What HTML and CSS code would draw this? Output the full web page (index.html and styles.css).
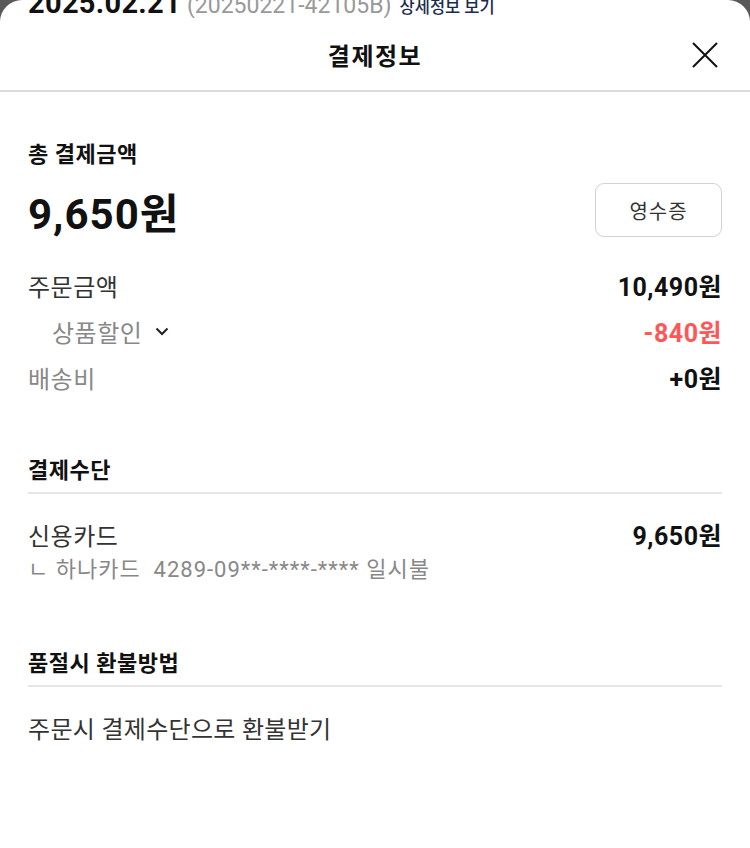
FILE: index.html
```html
<!DOCTYPE html>
<html lang="ko">
<head>
<meta charset="utf-8">
<title>결제정보</title>
<link rel="stylesheet" href="styles.css">
</head>
<body>
<div class="sheet">
  <div class="peek">
    <div class="peek-line">
      <span class="peek-date">2025.02.21</span>
      <span class="peek-no">(20250221-42105B)</span>
      <span class="peek-link">상세정보 보기</span>
    </div>
  </div>
  <header class="header">
    <h1 class="title">결제정보</h1>
    <svg class="close" width="26" height="26" viewBox="0 0 26 26" aria-hidden="true">
      <path d="M1 1 L25 25 M25 1 L1 25" stroke="#111" stroke-width="2" fill="none"/>
    </svg>
  </header>

  <section class="sec sec-total">
    <h2 class="heading">총 결제금액</h2>
    <div class="total-row">
      <span class="total">9,650원</span>
      <button class="receipt">영수증</button>
    </div>
    <div class="row">
      <span class="label dark">주문금액</span>
      <span class="value">10,490원</span>
    </div>
    <div class="row">
      <span class="label sub">상품할인
        <svg class="chev" width="14" height="9" viewBox="0 0 14 9" aria-hidden="true"><path d="M1.5 1.5 L7 7 L12.5 1.5" stroke="#222" stroke-width="2" fill="none"/></svg>
      </span>
      <span class="value red">-840원</span>
    </div>
    <div class="row">
      <span class="label">배송비</span>
      <span class="value">+0원</span>
    </div>
  </section>

  <section class="sec sec-pay">
    <h2 class="heading ruled">결제수단</h2>
    <div class="row pay-row">
      <span class="label dark">신용카드</span>
      <span class="value">9,650원</span>
    </div>
    <div class="card-info">ㄴ 하나카드&nbsp; 4289-09**-****-**** 일시불</div>
  </section>

  <section class="sec sec-refund">
    <h2 class="heading ruled">품절시 환불방법</h2>
    <p class="refund">주문시 결제수단으로 환불받기</p>
  </section>
</div>
</body>
</html>
```

FILE: styles.css
```css
* { box-sizing: border-box; }
html, body { margin: 0; padding: 0; height: 100%; }
body {
  background: #595959;
  font-family: Roboto, "Noto Sans CJK KR", sans-serif;
  color: #111;
}
.sheet {
  background: #fff;
  border-radius: 22px 22px 0 0;
  height: 848px;
  overflow: hidden;
}
.peek {
  height: 18px;
  overflow: hidden;
  padding: 0 28px;
}
.peek-line {
  display: flex;
  align-items: baseline;
  gap: 6px;
  margin-top: -12px;
  line-height: 30px;
  white-space: nowrap;
}
.peek-date { font-size: 29px; font-weight: 700; color: #111; letter-spacing: 0.3px; }
.peek-no { font-size: 23px; color: #999; }
.peek-link { font-size: 16.5px; color: #1b2b4d; font-weight: 500; margin-left: 2px; }

.header {
  height: 74px;
  padding-top: 6px;
  border-bottom: 2px solid #d9dcdf;
  display: flex;
  align-items: center;
  justify-content: center;
  position: relative;
}
.title {
  margin: 0;
  font-size: 24px;
  font-weight: 700;
  line-height: 30px;
  letter-spacing: 1.5px;
  color: #111;
}
.close {
  position: absolute;
  right: 32px;
  top: 24px;
}

.sec { padding: 0 28px; }
.sec-total { padding-top: 48px; }
.sec-pay { padding-top: 56px; }
.sec-refund { padding-top: 66px; }

.heading {
  margin: 0;
  font-size: 22px;
  font-weight: 700;
  line-height: 30px;
  letter-spacing: 0.5px;
  color: #111;
}
.heading.ruled {
  padding-bottom: 6px;
  border-bottom: 2px solid #e6e6e6;
}

.total-row {
  display: flex;
  justify-content: space-between;
  align-items: center;
  margin-top: 13px;
  height: 54px;
  margin-bottom: 25px;
}
.total {
  font-size: 42px;
  font-weight: 700;
  letter-spacing: 1px;
  color: #111;
}
.receipt {
  width: 127px;
  height: 54px;
  border: 1.5px solid #d2d2d2;
  border-radius: 9px;
  background: #fff;
  font-family: "Noto Sans CJK KR", sans-serif;
  font-size: 20px;
  letter-spacing: 1px;
  color: #333;
  padding: 0;
}

.row {
  display: flex;
  justify-content: space-between;
  align-items: center;
  height: 46px;
}
.label {
  font-size: 24px;
  letter-spacing: 0.5px;
  color: #888;
  display: flex;
  align-items: center;
}
.label.dark { color: #333; }
.label.sub { padding-left: 24px; }
.chev { margin-left: 13px; }
.value {
  font-size: 25px;
  font-weight: 700;
  letter-spacing: 0.5px;
  color: #111;
}
.value.red { color: #ff5656; }

.pay-row { margin-top: 25px; height: 30px; }
.card-info {
  margin-top: 8px;
  line-height: 26px;
  font-size: 22px;
  letter-spacing: 1px;
  color: #888;
}
.refund {
  margin: 28px 0 0;
  line-height: 30px;
  font-size: 24px;
  letter-spacing: 0.3px;
  color: #333;
}
```
